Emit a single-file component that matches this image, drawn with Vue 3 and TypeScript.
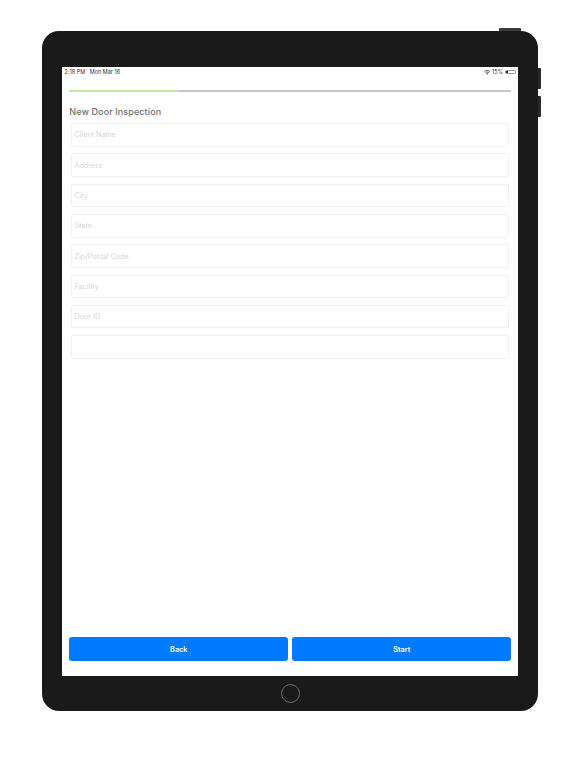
<script setup lang="ts">
const fields: string[] = ['Client Name', 'Address', 'City', 'State', 'Zip/Postal Code', 'Facility', 'Door ID', '']
</script>

<template>
  <div class="page">
    <div class="device">
      <span class="top-btn"></span>
      <span class="side-btn side-a"></span>
      <span class="side-btn side-b"></span>
      <main class="screen">
        <header class="status">
          <span class="time">2:18 PM<span class="date">Mon Mar 16</span></span>
          <span class="status-right">
            <svg class="wifi" viewBox="0 0 12 9" width="6.5" height="5">
              <path d="M.6 3C3.6.2 8.4.2 11.4 3" fill="none" stroke="#333" stroke-width="1.4" />
              <path d="M2.6 5C4.6 3.4 7.4 3.4 9.4 5" fill="none" stroke="#333" stroke-width="1.4" />
              <path d="M4.4 6.6 6 8.6 7.6 6.6C6.7 5.9 5.3 5.9 4.4 6.6Z" fill="#333" />
            </svg>
            <span class="pct">15%</span>
            <span class="battery"><span class="battery-fill"></span></span>
          </span>
        </header>
        <div class="progress"></div>
        <h1 class="title">New Door Inspection</h1>
        <form class="form" @submit.prevent>
          <input v-for="(f, i) in fields" :key="i" class="field" :placeholder="f" type="text" />
        </form>
        <div class="actions">
          <button class="btn" type="button">Back</button>
          <button class="btn" type="button">Start</button>
        </div>
      </main>
      <div class="chin"><span class="home"></span></div>
    </div>
  </div>
</template>

<style>
html, body { margin: 0; background: #fff; }
</style>

<style scoped>
.page {
  width: 576px;
  height: 768px;
  box-sizing: border-box;
  padding: 31px 37.7px 0 42px;
  font-family: Inter, "Noto Sans", sans-serif;
  overflow: hidden;
}
.device {
  position: relative;
  width: 496.3px;
  height: 680.3px;
  box-sizing: border-box;
  padding: 36.3px 20px 0 20.3px;
  background: #1a1a1a;
  border-radius: 17px;
  display: flex;
  flex-direction: column;
}
.top-btn {
  position: absolute;
  top: -2.7px;
  right: 17.3px;
  width: 22px;
  height: 2.7px;
  background: #3a3a3a;
  border-radius: 1px 1px 0 0;
}
.side-btn {
  position: absolute;
  right: -2.5px;
  width: 2.5px;
  height: 21.3px;
  background: #2a2a2a;
  border-radius: 0 1px 1px 0;
}
.side-a { top: 36.7px; }
.side-b { top: 65px; }
.screen {
  height: 608.4px;
  background: #fff;
  display: flex;
  flex-direction: column;
  padding: 0 7px 14.7px;
  box-sizing: border-box;
}
.status {
  height: 9px;
  box-sizing: border-box;
  padding-top: 0.7px;
  margin: 0 -4.7px 0 -4.7px;
  display: flex;
  justify-content: space-between;
  align-items: center;
  font-size: 5.5px;
  line-height: 8px;
  color: #333;
}
.date { margin-left: 4.5px; }
.status-right {
  display: flex;
  align-items: center;
}
.pct { margin-left: 2px; }
.battery {
  margin-left: 2px;
  width: 11px;
  height: 4.3px;
  border: 0.5px solid #999;
  border-radius: 1.2px;
  box-sizing: border-box;
  padding: 0.5px;
  display: flex;
}
.battery-fill { width: 2px; background: #333; }
.progress {
  flex: none;
  margin-top: 14px;
  height: 2px;
  background: linear-gradient(to right, #c2e8a0 109px, #c8c8c8 109px);
}
.title {
  margin: 13.3px 0 0;
  font-size: 9px;
  line-height: 12px;
  font-weight: 500;
  letter-spacing: 0.1px;
  color: #707070;
}
.form {
  margin: 5.6px 2px 0 1.7px;
  display: flex;
  flex-direction: column;
  gap: 6.8px;
}
.field {
  height: 23.5px;
  padding: 0 2.5px;
  box-sizing: border-box;
  border: 0.75px solid #f2f2f2;
  border-radius: 2px;
  background: #fff;
  font-family: inherit;
  font-size: 7.2px;
  outline: none;
}
.field::placeholder { color: #d6d6d6; opacity: 1; }
.actions {
  margin-top: auto;
  display: flex;
  gap: 4px;
}
.btn {
  flex: 1;
  height: 24px;
  padding: 0;
  border: none;
  border-radius: 3px;
  background: #007aff;
  color: #fff;
  font-family: inherit;
  font-size: 7.3px;
  font-weight: 600;
}
.chin {
  flex: 1;
  display: flex;
  align-items: center;
  justify-content: center;
}
.home {
  width: 19px;
  height: 19px;
  box-sizing: border-box;
  border: 0.8px solid #6a6a6a;
  border-radius: 50%;
}
</style>
